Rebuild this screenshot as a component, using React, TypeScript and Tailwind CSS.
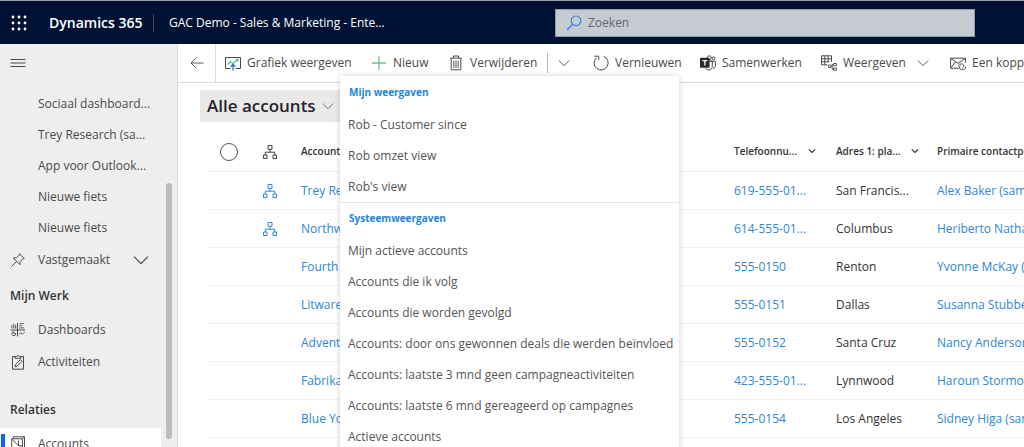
import type { ReactNode } from "react";

type IconProps = { className?: string };

function Svg({ className = "h-4 w-4", box = 16, children }: { className?: string; box?: number; children: ReactNode }) {
  return (
    <svg
      viewBox={`0 0 ${box} ${box}`}
      className={`shrink-0 ${className}`}
      fill="none"
      stroke="currentColor"
      strokeWidth="1"
      aria-hidden="true"
    >
      {children}
    </svg>
  );
}

function WaffleIcon() {
  const steps = [2, 8, 14];
  return (
    <Svg className="h-4 w-4">
      {steps.map((y) => steps.map((x) => <circle key={`${x}-${y}`} cx={x} cy={y} r="1.4" fill="currentColor" stroke="none" />))}
    </Svg>
  );
}

function SearchIcon() {
  return (
    <Svg className="h-4 w-4 text-[#2f86e0]">
      <circle cx="10" cy="5.8" r="4.8" strokeWidth="1.2" />
      <path d="M6.6 9.2 1 15" strokeWidth="1.3" />
    </Svg>
  );
}

function MenuIcon() {
  return (
    <Svg>
      <path d="M.5 4.5h15M.5 8h15M.5 11.5h15" strokeWidth="1.2" />
    </Svg>
  );
}

function BackIcon() {
  return (
    <Svg>
      <path d="M14.5 8H2M7.5 2.500 2 8l5.500 5.500" strokeWidth=".9" />
    </Svg>
  );
}

function ChevronIcon({ className = "h-3 w-3" }: IconProps) {
  return (
    <Svg className={className} box={12}>
      <path d="M.8 3.5 6 8.700l5.200-5.200" strokeWidth=".9" />
    </Svg>
  );
}

function SortIcon() {
  return (
    <Svg className="h-2 w-2" box={8}>
      <path d="m.8 2.300 3.200 3.200 3.200-3.200" strokeWidth="1.200" />
    </Svg>
  );
}

function ChartIcon() {
  return (
    <Svg>
      <path d="M5.500 13.500h-5v-11h15v11h-5" strokeWidth="1" />
      <path d="m2.500 9.500 3-3 2.500 2 4.500-4M10.500 4.200h2.500v2.500" stroke="#4fbf8b" strokeWidth="1.100" />
      <path d="M8 15.500v-6M5.700 11.800 8 9.500l2.300 2.300" stroke="#2b6cb8" strokeWidth="1.300" />
    </Svg>
  );
}

function PlusIcon() {
  return (
    <Svg className="h-4 w-4 text-[#6cc596]">
      <path d="M8 .8v14.400M.8 8h14.400" strokeWidth="1.300" />
    </Svg>
  );
}

function TrashIcon() {
  return (
    <Svg>
      <path d="M2 3.200h12M5.500 3V1h5v2M3.200 3.500v11.300h9.600V3.500" />
      <path d="M5.700 5.500v7.500M7.200 5.500v7.500M8.800 5.500v7.500M10.300 5.500v7.500" strokeWidth=".7" />
    </Svg>
  );
}

function RefreshIcon() {
  return (
    <Svg>
      <path d="M10.500 1.400A7 7 0 1 1 3.300 2.900" />
      <path d="M1.500 1.200h4.200v4" />
    </Svg>
  );
}

function TeamsIcon() {
  return (
    <Svg>
      <circle cx="9.300" cy="2.800" r="2" />
      <circle cx="13.500" cy="3.300" r="1.400" />
      <path d="M10 6.200h5.400v4.600c0 1.600-1 2.600-2.400 2.600M9.500 6.200h2.800v5.300c0 2-1.500 3.400-3.500 3.400-1.600 0-2.900-.9-3.300-2.300" />
      <rect x="0" y="2.800" width="9.600" height="10" rx=".8" fill="#33262a" stroke="none" />
      <path d="M2.500 5.600h4.800M4.900 5.600v5" stroke="#fff" strokeWidth="1.300" />
    </Svg>
  );
}

function ShowAsIcon() {
  return (
    <Svg>
      <path d="M.5.8h10v6M.5.8v9h6M.5 3.800h10M.5 6.800h8M3.800.8v9M7.200.8v6.500" />
      <path d="M7.500 10h2.500v2.500H7.500zM12.500 8.500h3v2.200h-3zM12.500 13h3v2.200h-3zM10 11.200h1.200M11.200 9.500v4.600M11.200 9.500h1.300M11.200 14.100h1.300" strokeWidth=".9" />
    </Svg>
  );
}

function MailLinkIcon() {
  return (
    <Svg>
      <path d="M9 13.200H.6V3.200h14.800v4.500M.8 3.500 8 8.300l7.200-4.800M.8 13l4.600-6" />
      <path d="M9.800 12.500a2 2 0 0 1 0-3.500h2.500a1.900 1.900 0 0 1 0 3.600M14.500 10.800a1.900 1.900 0 0 1-1 3.600H11a1.900 1.900 0 0 1-.5-3.500" strokeWidth=".9" />
    </Svg>
  );
}

function PinIcon() {
  return (
    <Svg className="h-4 w-4">
      <path d="M9.500 1.800 14.200 6.500l-1.400.4-2.600 2.600-.2 3.200-6.700-6.700 3.200-.2L9.100 3.200zM6.600 9.400 1.500 14.500" />
    </Svg>
  );
}

function DashboardsIcon() {
  return (
    <Svg>
      <path d="M.5 8h14.500M7.500 1v13.500" />
      <path d="M1.800 6.500V3.200M3.700 6.500V1.500M5.600 6.500V2.800M9.300 1.700h4.500M9.300 3.800h3M9.300 5.900h5" strokeWidth=".9" />
      <path d="M5.800 11.400a2 2 0 1 1-2-1.700v1.800zM9 12.300l1.700-1.500 1.700 1.500 2.300-2.200" strokeWidth=".9" />
    </Svg>
  );
}

function ActivitiesIcon() {
  return (
    <Svg>
      <path d="M5 2.500H2.500v12.700h11V2.500H11M5 4.300V2.500h1.600a1.500 1.500 0 0 1 2.800 0H11v1.800z" />
      <path d="m5 12.800.6-2.400 4.800-4.800 1.700 1.700-4.800 4.800z" />
    </Svg>
  );
}

function AccountsIcon() {
  return (
    <Svg>
      <path d="M3.500 2.500V.8h11v10.500l-2 2M1.700 2.800h10.700v12H1.700zM12.400 2.800l2.100-2M2 3.200l6.500 6.600h3.900M8.500 9.800V4.500" />
    </Svg>
  );
}

function HierarchyIcon({ className = "h-4 w-4" }: IconProps) {
  return (
    <Svg className={className}>
      <path d="M6 1.500h4v3.800H6zM1.500 11h3.500v3.500H1.500zM11 11h3.500v3.500H11zM8 5.300v2.900M3.300 11V8.200h9.400V11" />
    </Svg>
  );
}

const recentItems = ["Sociaal dashboard...", "Trey Research (sa...", "App voor Outlook...", "Nieuwe fiets", "Nieuwe fiets"];

const personalViews = ["Rob - Customer since", "Rob omzet view", "Rob's view"];

const systemViews = [
  "Mijn actieve accounts",
  "Accounts die ik volg",
  "Accounts die worden gevolgd",
  "Accounts: door ons gewonnen deals die werden beïnvloed",
  "Accounts: laatste 3 mnd geen campagneactiviteiten",
  "Accounts: laatste 6 mnd gereageerd op campagnes",
  "Actieve accounts",
];

const accounts = [
  { name: "Trey Research", phone: "619-555-01...", city: "San Francis...", contact: "Alex Baker (sample)", tree: true },
  { name: "Northwind Traders", phone: "614-555-01...", city: "Columbus", contact: "Heriberto Nathan", tree: true },
  { name: "Fourth Coffee", phone: "555-0150", city: "Renton", contact: "Yvonne McKay (sample)", tree: false },
  { name: "Litware, Inc.", phone: "555-0151", city: "Dallas", contact: "Susanna Stubberod", tree: false },
  { name: "Adventure Works", phone: "555-0152", city: "Santa Cruz", contact: "Nancy Anderson", tree: false },
  { name: "Fabrikam, Inc.", phone: "423-555-01...", city: "Lynnwood", contact: "Haroun Stormonth", tree: false },
  { name: "Blue Yonder Airlines", phone: "555-0154", city: "Los Angeles", contact: "Sidney Higa (sample)", tree: false },
];

function TopBar() {
  return (
    <header className="flex h-11 shrink-0 items-center border-t border-[#98a4ac] bg-[#001233] text-white">
      <button type="button" aria-label="Apps" className="ml-[11px] flex">
        <WaffleIcon />
      </button>
      <a href="#home" className="ml-[22px] w-[91px] text-sm font-semibold whitespace-nowrap">
        Dynamics 365
      </a>
      <span className="ml-[13px] h-[18px] w-px bg-[#3f4a60]" />
      <span className="ml-[15px] w-[386px] whitespace-nowrap">GAC Demo - Sales &amp; Marketing - Ente...</span>
      <label className="flex h-7 w-[420px] items-center gap-1.5 border border-[#8f98a5] bg-[#c6cbd2] px-2.5">
        <SearchIcon />
        <input
          type="search"
          aria-label="Zoeken"
          placeholder="Zoeken"
          className="min-w-0 flex-1 bg-transparent outline-none placeholder:text-[#63686f]"
        />
      </label>
    </header>
  );
}

function Sidebar() {
  return (
    <nav className="relative flex w-[178px] shrink-0 flex-col border-r border-[#dcdcdc] bg-[#eeeeee] text-[#4a4a4a]">
      <button type="button" aria-label="Menu" className="mt-[11px] ml-2.5 flex shrink-0">
        <MenuIcon />
      </button>
      <div className="mt-[17px] shrink-0">
        {recentItems.map((label, i) => (
          <a key={i} href="#recent" className="flex h-[31px] items-center pl-[38px] whitespace-nowrap">
            {label}
          </a>
        ))}
        <button type="button" className="flex h-[33px] w-full items-center pr-7 pl-2.5">
          <PinIcon />
          <span className="ml-3 flex-1 text-left">Vastgemaakt</span>
          <ChevronIcon className="h-4 w-4" />
        </button>
      </div>
      <h2 className="mt-1 flex h-8 shrink-0 items-center pl-2.5 font-semibold text-[#333]">Mijn Werk</h2>
      <a href="#dashboards" className="mt-0.5 flex h-8 shrink-0 items-center gap-3 pl-2.5">
        <DashboardsIcon />
        Dashboards
      </a>
      <a href="#activiteiten" className="flex h-8 shrink-0 items-center gap-3 pl-2.5">
        <ActivitiesIcon />
        Activiteiten
      </a>
      <h2 className="mt-4 flex h-8 shrink-0 items-center pl-2.5 font-semibold text-[#333]">Relaties</h2>
      <a href="#accounts" className="mt-0.5 mr-4 flex h-8 shrink-0 items-center bg-white">
        <span className="ml-px h-5 w-1 bg-[#0b63f6]" />
        <span className="ml-[5px] flex items-center gap-3">
          <AccountsIcon />
          Accounts
        </span>
      </a>
      <span className="absolute top-[139px] right-[5px] h-64 w-1.5 rounded-full bg-[#bdbdbd]" />
    </nav>
  );
}

function Command({ icon, label, className = "" }: { icon: ReactNode; label: string; className?: string }) {
  return (
    <button type="button" className={`flex shrink-0 items-center gap-1.5 text-left whitespace-nowrap ${className}`}>
      {icon}
      {label}
    </button>
  );
}

function CommandBar() {
  return (
    <div className="flex h-[39px] shrink-0 items-center overflow-hidden border-b border-[#dcdcdc] text-[#4a4a4a]">
      <button type="button" aria-label="Terug" className="flex h-full w-[38px] shrink-0 items-center justify-center border-r border-[#dcdcdc]">
        <BackIcon />
      </button>
      <Command icon={<ChartIcon />} label="Grafiek weergeven" className="ml-[9px] w-[146px]" />
      <Command icon={<PlusIcon />} label="Nieuw" className="w-[77px]" />
      <Command icon={<TrashIcon />} label="Verwijderen" className="w-[99px]" />
      <span className="h-5 w-px shrink-0 bg-[#b5b5b5]" />
      <button type="button" aria-label="Meer verwijderopties" className="ml-2.5 flex w-[35px] shrink-0">
        <ChevronIcon />
      </button>
      <Command icon={<RefreshIcon />} label="Vernieuwen" className="w-[107px]" />
      <Command icon={<TeamsIcon />} label="Samenwerken" className="w-[121px]" />
      <Command icon={<ShowAsIcon />} label="Weergeven" className="w-24" />
      <button type="button" aria-label="Weergaveopties" className="flex w-[33px] shrink-0">
        <ChevronIcon />
      </button>
      <Command icon={<MailLinkIcon />} label="Een koppeling e-mailen" />
    </div>
  );
}

function ViewGroup({ title, views }: { title: string; views: string[] }) {
  return (
    <section className="border-t border-[#e6e6e6] first:border-t-0">
      <h3 className="flex h-8 items-center px-[9px] text-[10px] font-bold text-[#1b86dc]">{title}</h3>
      {views.map((view) => (
        <button key={view} type="button" role="menuitem" className="flex h-[31px] w-full items-center px-2 whitespace-nowrap text-[#555]">
          {view}
        </button>
      ))}
    </section>
  );
}

function ViewMenu() {
  return (
    <div role="menu" className="absolute -top-3.5 left-[140px] z-10 w-[339px] bg-white pt-px shadow-[0_0_6px_rgba(0,0,0,0.18)]">
      <ViewGroup title="Mijn weergaven" views={personalViews} />
      <ViewGroup title="Systeemweergaven" views={systemViews} />
    </div>
  );
}

function AccountsTable() {
  const cell = "border-b border-[#f1f1f1] p-0 pl-2 text-left whitespace-nowrap";
  const head = `${cell} text-[10px] font-semibold text-[#333]`;
  return (
    <table className="w-full table-fixed border-separate border-spacing-0">
      <colgroup>
        <col className="w-12" />
        <col className="w-[39px]" />
        <col />
        <col className="w-[102px]" />
        <col className="w-[101px]" />
        <col className="w-[95px]" />
      </colgroup>
      <thead>
        <tr className="h-10">
          <th className={`${cell} pl-3.5`}>
            <input type="checkbox" aria-label="Alles selecteren" className="block size-[18px] appearance-none rounded-full border border-[#555]" />
          </th>
          <th className={`${cell} text-[#444]`} aria-label="Hiërarchie">
            <HierarchyIcon />
          </th>
          <th className={head}>Accountnaam</th>
          <th className={head}>
            <span className="flex items-center justify-between pr-3">
              Telefoonnu... <SortIcon />
            </span>
          </th>
          <th className={head}>
            <span className="flex items-center justify-between pr-2.5">
              Adres 1: pla... <SortIcon />
            </span>
          </th>
          <th className={head}>Primaire contactpersoon</th>
        </tr>
      </thead>
      <tbody>
        {accounts.map((account) => (
          <tr key={account.name} className="h-[38px]">
            <td className={cell} />
            <td className={`${cell} text-[#2b88d8]`}>{account.tree && <HierarchyIcon />}</td>
            <td className={`${cell} text-[#2b88d8]`}>
              <a href="#account">{account.name}</a>
            </td>
            <td className={`${cell} text-[#2b88d8]`}>
              <a href="#telefoon">{account.phone}</a>
            </td>
            <td className={`${cell} text-[#333]`}>{account.city}</td>
            <td className={`${cell} text-[#2b88d8]`}>
              <a href="#contact">{account.contact}</a>
            </td>
          </tr>
        ))}
      </tbody>
    </table>
  );
}

export default function App() {
  return (
    <div className="flex h-screen flex-col overflow-hidden bg-white font-['Open_Sans','Noto_Sans',sans-serif] text-xs">
      <TopBar />
      <div className="flex min-h-0 flex-1">
        <Sidebar />
        <main className="flex min-w-0 flex-1 flex-col">
          <CommandBar />
          <div className="relative mt-[7px] ml-[22px]">
            <button
              type="button"
              aria-haspopup="menu"
              aria-expanded="true"
              className="flex h-8 w-[146px] items-center gap-1.5 rounded-xs bg-[#ebe9e8] px-[7px] text-[17px] font-semibold whitespace-nowrap text-[#252330]"
            >
              Alle accounts
              <ChevronIcon className="h-3 w-3 text-[#666]" />
            </button>
            <ViewMenu />
          </div>
          <div className="mt-[10px] ml-7">
            <AccountsTable />
          </div>
        </main>
      </div>
    </div>
  );
}
